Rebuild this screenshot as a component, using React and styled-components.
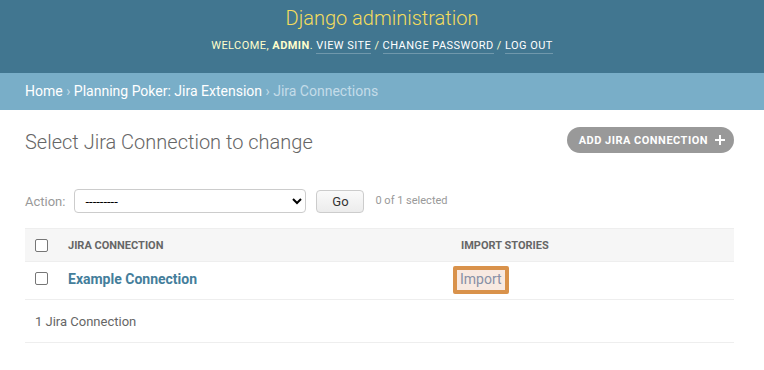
import styled, { createGlobalStyle } from 'styled-components';

const GlobalStyle = createGlobalStyle`
	body {
		margin: 0;
		font-family: Roboto, "Liberation Sans", sans-serif;
		font-size: 14px;
		color: #333;
		background: #fff;
	}
	a {
		text-decoration: none;
	}
`;

const Header = styled.header`
	background: #417690;
	height: 73px;
	display: flex;
	flex-direction: column;
	align-items: center;
	box-sizing: border-box;
	padding-top: 5px;
`;

const Branding = styled.h1`
	margin: 0;
	font-size: 20px;
	font-weight: 300;
	color: #f5dd5d;
	line-height: 26px;
`;

const UserTools = styled.div`
	margin-top: 7px;
	font-size: 11px;
	letter-spacing: 0.45px;
	text-transform: uppercase;
	color: #ffc;
	line-height: 16px;

	strong {
		font-weight: 700;
	}
`;

const ToolLink = styled.a`
	color: #fff;
	border-bottom: 1px solid rgba(255, 255, 255, 0.25);
	padding-bottom: 1px;
`;

const Breadcrumbs = styled.nav`
	background: #79aec8;
	height: 37px;
	box-sizing: border-box;
	padding: 10px 25px;
	font-size: 14px;
	line-height: 17px;
	color: #c4dce8;

	a {
		color: #fff;
	}
`;

const Content = styled.main`
	padding: 17px 30px 0 25px;
`;

const TitleRow = styled.div`
	display: flex;
	justify-content: space-between;
	align-items: flex-start;
	height: 32px;
`;

const Title = styled.h1`
	margin: 0;
	font-size: 20px;
	font-weight: 300;
	line-height: 30px;
	color: #666;
`;

const AddButton = styled.a`
	display: inline-flex;
	align-items: center;
	gap: 7px;
	background: #999;
	color: #fff;
	border-radius: 15px;
	height: 26px;
	padding: 0 9px 0 12px;
	font-size: 11px;
	font-weight: 700;
	letter-spacing: 0.5px;
	text-transform: uppercase;
`;

const Actions = styled.div`
	display: flex;
	align-items: center;
	margin-top: 30px;
	height: 24px;
	font-size: 13px;
	color: #666;
`;

const ActionLabel = styled.label`
	color: #999;
	font-size: 13px;
	margin-right: 9px;
`;

const Select = styled.select`
	width: 232px;
	height: 24px;
	border: 1px solid #ccc;
	border-radius: 4px;
	background: #fff;
	font-family: Roboto, "Liberation Sans", sans-serif;
	font-size: 13px;
	padding: 0 6px;
	color: #000;
`;

const GoButton = styled.button`
	margin-left: 10px;
	width: 48px;
	height: 23px;
	border: 1px solid #ccc;
	border-radius: 4px;
	background: linear-gradient(#fafafa, #ececec);
	font-family: Roboto, "Liberation Sans", sans-serif;
	font-size: 13px;
	color: #333;
	padding: 0;
`;

const Counter = styled.span`
	margin-left: 11px;
	font-size: 11px;
	color: #999;
	margin-top: -2px;
`;

const Table = styled.table`
	margin-top: 15px;
	width: 709px;
	border-collapse: collapse;
`;

const HeadRow = styled.tr`
	background: #f6f6f6;
	border-top: 1px solid #eee;
	border-bottom: 1px solid #eee;
	height: 33px;
`;

const Th = styled.th`
	text-align: left;
	font-size: 11px;
	font-weight: 700;
	text-transform: uppercase;
	color: #666;
	padding: 0;
	padding-left: ${(p) => (p.$check ? '10px' : '0')};
	width: ${(p) => p.$w || 'auto'};
`;

const Row = styled.tr`
	border-bottom: 1px solid #eee;
	height: 38px;
`;

const Td = styled.td`
	padding: 9px 0 0;
	padding-left: ${(p) => (p.$check ? '10px' : '0')};
	vertical-align: top;
	line-height: 17px;
`;

const Checkbox = styled.span`
	display: block;
	width: 11px;
	height: 11px;
	border: 1px solid #767676;
	border-radius: 2px;
	background: #fff;
	margin-top: ${(p) => (p.$row ? '1px' : '0')};
`;

const NameLink = styled.a`
	font-size: 14px;
	font-weight: 700;
	color: #447e9b;
`;

const ImportLink = styled.a`
	display: inline-block;
	margin-left: -8px;
	margin-top: -6px;
	padding: 1px 3px 2px;
	border: 4px solid #d9924b;
	border-radius: 2px;
	background: #f8e9e1;
	color: #8790a6;
	font-size: 14px;
	line-height: 17px;
`;

const Paginator = styled.p`
	margin: 0;
	padding: 0 10px;
	height: 42px;
	display: flex;
	align-items: center;
	font-size: 13px;
	color: #666;
	border-bottom: 1px solid #eee;
	width: 689px;
`;

const Plus = () => (
	<svg width="10" height="10" viewBox="0 0 10 10">
		<path d="M4 0h2v4h4v2H6v4H4V6H0V4h4z" fill="#fff" />
	</svg>
);

export default function App() {
	return (
		<>
			<GlobalStyle />
			<Header>
				<Branding>Django administration</Branding>
				<UserTools>
					Welcome, <strong>admin</strong>. <ToolLink href="#">View site</ToolLink> /{' '}
					<ToolLink href="#">Change password</ToolLink> / <ToolLink href="#">Log out</ToolLink>
				</UserTools>
			</Header>
			<Breadcrumbs>
				<a href="#">Home</a> › <a href="#">Planning Poker: Jira Extension</a> › Jira Connections
			</Breadcrumbs>
			<Content>
				<TitleRow>
					<Title>Select Jira Connection to change</Title>
					<AddButton href="#">
						Add Jira Connection <Plus />
					</AddButton>
				</TitleRow>
				<Actions>
					<ActionLabel>Action:</ActionLabel>
					<Select defaultValue="">
						<option value="">---------</option>
					</Select>
					<GoButton>Go</GoButton>
					<Counter>0 of 1 selected</Counter>
				</Actions>
				<Table>
					<thead>
						<HeadRow>
							<Th $check $w="33px">
								<Checkbox />
							</Th>
							<Th $w="393px">Jira Connection</Th>
							<Th>Import stories</Th>
						</HeadRow>
					</thead>
					<tbody>
						<Row>
							<Td $check>
								<Checkbox $row />
							</Td>
							<Td>
								<NameLink href="#">Example Connection</NameLink>
							</Td>
							<Td>
								<ImportLink href="#">Import</ImportLink>
							</Td>
						</Row>
					</tbody>
				</Table>
				<Paginator>1 Jira Connection</Paginator>
			</Content>
		</>
	);
}
